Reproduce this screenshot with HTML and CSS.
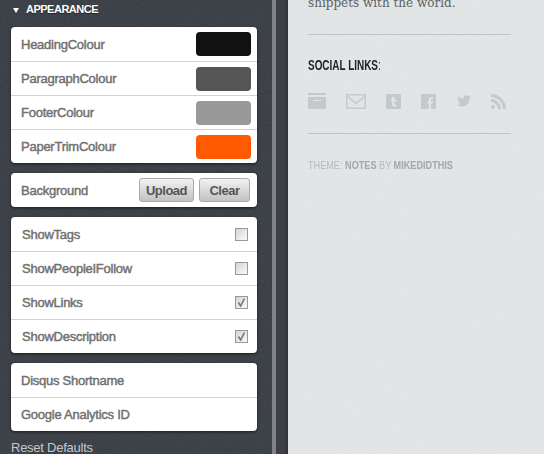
FILE: index.html
```html
<!DOCTYPE html>
<html lang="en">

<head>
    <meta charset="UTF-8">
    <meta name="viewport" content="width=device-width, initial-scale=1.0">
    <title>Appearance</title>
    <link rel="stylesheet" href="styles.css">
</head>

<body>
    <aside class="sidebar">
        <svg class="noise" width="272" height="454"><filter id="grainDark"><feTurbulence type="fractalNoise" baseFrequency="0.9" numOctaves="2"/><feColorMatrix values="0 0 0 0 0  0 0 0 0 0  0 0 0 0 0  0.3 0 0 0 -0.08"/></filter><rect width="272" height="454" filter="url(#grainDark)"/></svg>
        <h2 class="section-title"><span class="arrow"></span>APPEARANCE</h2>

        <div class="card">
            <div class="row"><span>HeadingColour</span><span class="swatch swatch-heading"></span></div>
            <div class="row"><span>ParagraphColour</span><span class="swatch swatch-paragraph"></span></div>
            <div class="row"><span>FooterColour</span><span class="swatch swatch-footer"></span></div>
            <div class="row"><span>PaperTrimColour</span><span class="swatch swatch-trim"></span></div>
        </div>

        <div class="card">
            <div class="row">
                <span>Background</span>
                <span class="buttons">
                    <button type="button" class="btn btn-upload">Upload</button>
                    <button type="button" class="btn btn-clear">Clear</button>
                </span>
            </div>
        </div>

        <div class="card toggles">
            <div class="row"><span>ShowTags</span><span class="check"></span></div>
            <div class="row"><span>ShowPeopleIFollow</span><span class="check"></span></div>
            <div class="row"><span>ShowLinks</span><span class="check"><svg viewBox="0 0 9 9" width="9" height="9"><path d="M1.5 4.500 L3.600 8 L7.500 .5" fill="none" stroke="#777" stroke-width="1.6"/></svg></span></div>
            <div class="row"><span>ShowDescription</span><span class="check"><svg viewBox="0 0 9 9" width="9" height="9"><path d="M1.5 4.500 L3.600 8 L7.500 .5" fill="none" stroke="#777" stroke-width="1.6"/></svg></span></div>
        </div>

        <div class="card">
            <div class="row"><span>Disqus Shortname</span></div>
            <div class="row"><span>Google Analytics ID</span></div>
        </div>

        <a class="reset" href="#">Reset Defaults</a>
    </aside>

    <div class="strip"></div>

    <main class="paper">
        <svg class="noise" width="256" height="454"><filter id="grainLight"><feTurbulence type="fractalNoise" baseFrequency="0.8" numOctaves="2"/><feColorMatrix values="0 0 0 0 0.55  0 0 0 0 0.58  0 0 0 0 0.6  0.22 0 0 0 -0.07"/></filter><rect width="256" height="454" filter="url(#grainLight)"/></svg>
        <p class="intro">shippets with the world.</p>
        <hr class="rule rule-top">
        <h3 class="social-title">SOCIAL LINKS<span class="colon">:</span></h3>
        <div class="social-icons">
            <svg class="icon-archive" width="18" height="16" viewBox="0 0 18 16"><path d="M0 0H18V2H0Z M0 4H18V16H0Z M5 7V8H13V7Z" fill="#c3c9cc" fill-rule="evenodd"/></svg>
            <svg class="icon-mail" width="20" height="15" viewBox="0 0 20 15"><path d="M0 0H20V15H0Z M1.5 1.5 10 8.5 18.5 1.5Z M1.5 3.2V13.5H18.5V3.2L10 10.5Z" fill="#c3c9cc" fill-rule="evenodd"/></svg>
            <svg class="icon-tumblr" width="15" height="15" viewBox="0 0 15 15"><path d="M1 0H14Q15 0 15 1V14Q15 15 14 15H1Q0 15 0 14V1Q0 0 1 0Z M6 3V5.500H5V7.500H6V10.500Q6 12.500 8.500 12.500H10.500V10.800H9Q8.300 10.800 8.300 10V7.500H10.300V5.500H8.300V3Z" fill="#c3c9cc" fill-rule="evenodd"/></svg>
            <svg class="icon-facebook" width="15" height="15" viewBox="0 0 15 15"><path d="M0 0H15V15H10V9.500H11.800L12 7.500H10V6Q10 5 11 5H12V3H10.300Q7.800 3 7.800 5.600V7.500H6.300V9.500H7.800V15H0Z" fill="#c3c9cc"/></svg>
            <svg class="icon-twitter" width="15" height="12" viewBox="0 0 15 12"><path d="M15 3.500 13.300 4Q13.400 8 10 10.500 7 12 3 11 1.500 10.800 1 10 3.500 10 4.500 9 2.500 8.500 2.200 7.200L3.500 7Q1.500 6 1.500 4.500L2.800 4.800Q1 3 2 1 4 3.500 7.300 3.800 7 1.500 9 .5 11 0 12.300 1.300L14.300 .6 13.300 2.300Z" fill="#c3c9cc"/></svg>
            <svg class="icon-rss" width="15" height="15" viewBox="0 0 15 15"><circle cx="2" cy="13" r="2" fill="#c3c9cc"/><path d="M0 6.500A8.500 8.500 0 0 1 8.500 15M0 1.500A13.500 13.500 0 0 1 13.500 15" fill="none" stroke="#c3c9cc" stroke-width="3"/></svg>
        </div>
        <hr class="rule rule-bottom">
        <p class="credit">THEME: <b>NOTES</b> BY <b>MIKEDIDTHIS</b></p>
    </main>
</body>

</html>
```

FILE: styles.css
```css
html,
body {
    height: 454px;
    overflow: hidden;
}

body {
    margin: 0;
    display: flex;
    font-family: "Liberation Sans", Arial, sans-serif;
    background-color: #e0e3e4;
}

.noise {
    position: absolute;
    top: 0;
    left: 0;
    pointer-events: none;
}

.sidebar {
    position: relative;
    width: 272px;
    height: 454px;
    flex: none;
    box-sizing: border-box;
    padding: 0 15px 0 11px;
    background-color: #42474e;
    overflow: hidden;
}

.section-title {
    position: relative;
    display: flex;
    align-items: center;
    height: 17px;
    margin: 0 0 10px 2px;
    padding-top: 1px;
    box-sizing: border-box;
    font-size: 11px;
    letter-spacing: -0.5px;
    font-weight: bold;
    color: #fff;
    text-shadow: 0 1px 1px #222;
}

.arrow {
    width: 0;
    height: 0;
    margin-right: 7px;
    margin-top: 2px;
    border-left: 3.5px solid transparent;
    border-right: 3.5px solid transparent;
    border-top: 5px solid #fff;
}

.card {
    position: relative;
    background-color: #fff;
    border-radius: 4px;
    box-shadow: 0 1px 3px rgba(0, 0, 0, 0.6);
    margin-bottom: 10px;
}

.row {
    display: flex;
    justify-content: space-between;
    align-items: center;
    height: 34px;
    box-sizing: border-box;
    padding: 0 6px 0 10px;
    border-top: 1px solid #d2d2d2;
    font-size: 13px;
    letter-spacing: -0.25px;
    color: #707070;
    -webkit-text-stroke: 0.45px #707070;
}

.row:first-child {
    border-top: none;
}

.toggles .row {
    padding: 0 9px 0 11px;
}

.swatch {
    width: 55px;
    height: 24px;
    border-radius: 4px;
}

.swatch-heading {
    background-color: #111;
}

.swatch-paragraph {
    background-color: #555;
}

.swatch-footer {
    background-color: #999;
}

.swatch-trim {
    background-color: #ff5a00;
}

.buttons {
    display: flex;
    gap: 5px;
    margin-right: 1px;
}

.btn {
    height: 24px;
    padding: 0;
    border: 1px solid #aaa;
    border-radius: 3px;
    background: linear-gradient(#f2f2f2, #c2c2c2);
    font-family: inherit;
    font-size: 13px;
    letter-spacing: -0.5px;
    font-weight: bold;
    color: #555;
    -webkit-text-stroke: 0;
}

.btn-upload {
    width: 55px;
}

.btn-clear {
    width: 51px;
}

.check {
    display: flex;
    align-items: center;
    justify-content: center;
    width: 13px;
    height: 13px;
    box-sizing: border-box;
    border: 1px solid #999;
    background: linear-gradient(135deg, #d4d4d4, #fafafa);
}

.reset {
    position: relative;
    display: block;
    font-size: 13px;
    line-height: 12px;
    letter-spacing: -0.25px;
    color: #c3c8cc;
    text-decoration: none;
    margin-top: 11px;
}

.strip {
    width: 16px;
    flex: none;
    box-sizing: border-box;
    border-left: 4px solid #808285;
    background: linear-gradient(to right, #3c4046 70%, #2e3135);
}

.paper {
    position: relative;
    flex: 1;
    padding: 0 33px 0 20px;
    background-color: #e3e6e7;
}

.paper > p,
.paper > h3,
.paper > hr,
.paper > div {
    position: relative;
}

.intro {
    margin: -6px 0 0;
    font-family: "DejaVu Serif", serif;
    font-size: 12px;
    line-height: 18px;
    color: #5c6061;
}

.rule {
    height: 1px;
    margin: 0;
    border: none;
    background-color: #bfc4c6;
}

.rule-top {
    margin-top: 22px;
}

.social-title {
    margin: 21px 0 0;
    font-size: 14px;
    line-height: 18px;
    font-weight: bold;
    color: #222;
    white-space: nowrap;
    transform: scaleX(0.71);
    transform-origin: left;
}

.colon {
    font-weight: normal;
}

.social-icons {
    display: flex;
    align-items: center;
    height: 16px;
    margin-top: 19px;
}

.icon-mail,
.icon-tumblr,
.icon-facebook,
.icon-twitter,
.icon-rss {
    margin-left: 20px;
}

.rule-bottom {
    margin-top: 24px;
}

.credit {
    margin: 25px 0 0;
    font-size: 11px;
    line-height: 12px;
    color: #b5b9ba;
    white-space: nowrap;
    transform: scaleX(0.83);
    transform-origin: left;
}

.credit b {
    color: #a2a7a9;
}
```
